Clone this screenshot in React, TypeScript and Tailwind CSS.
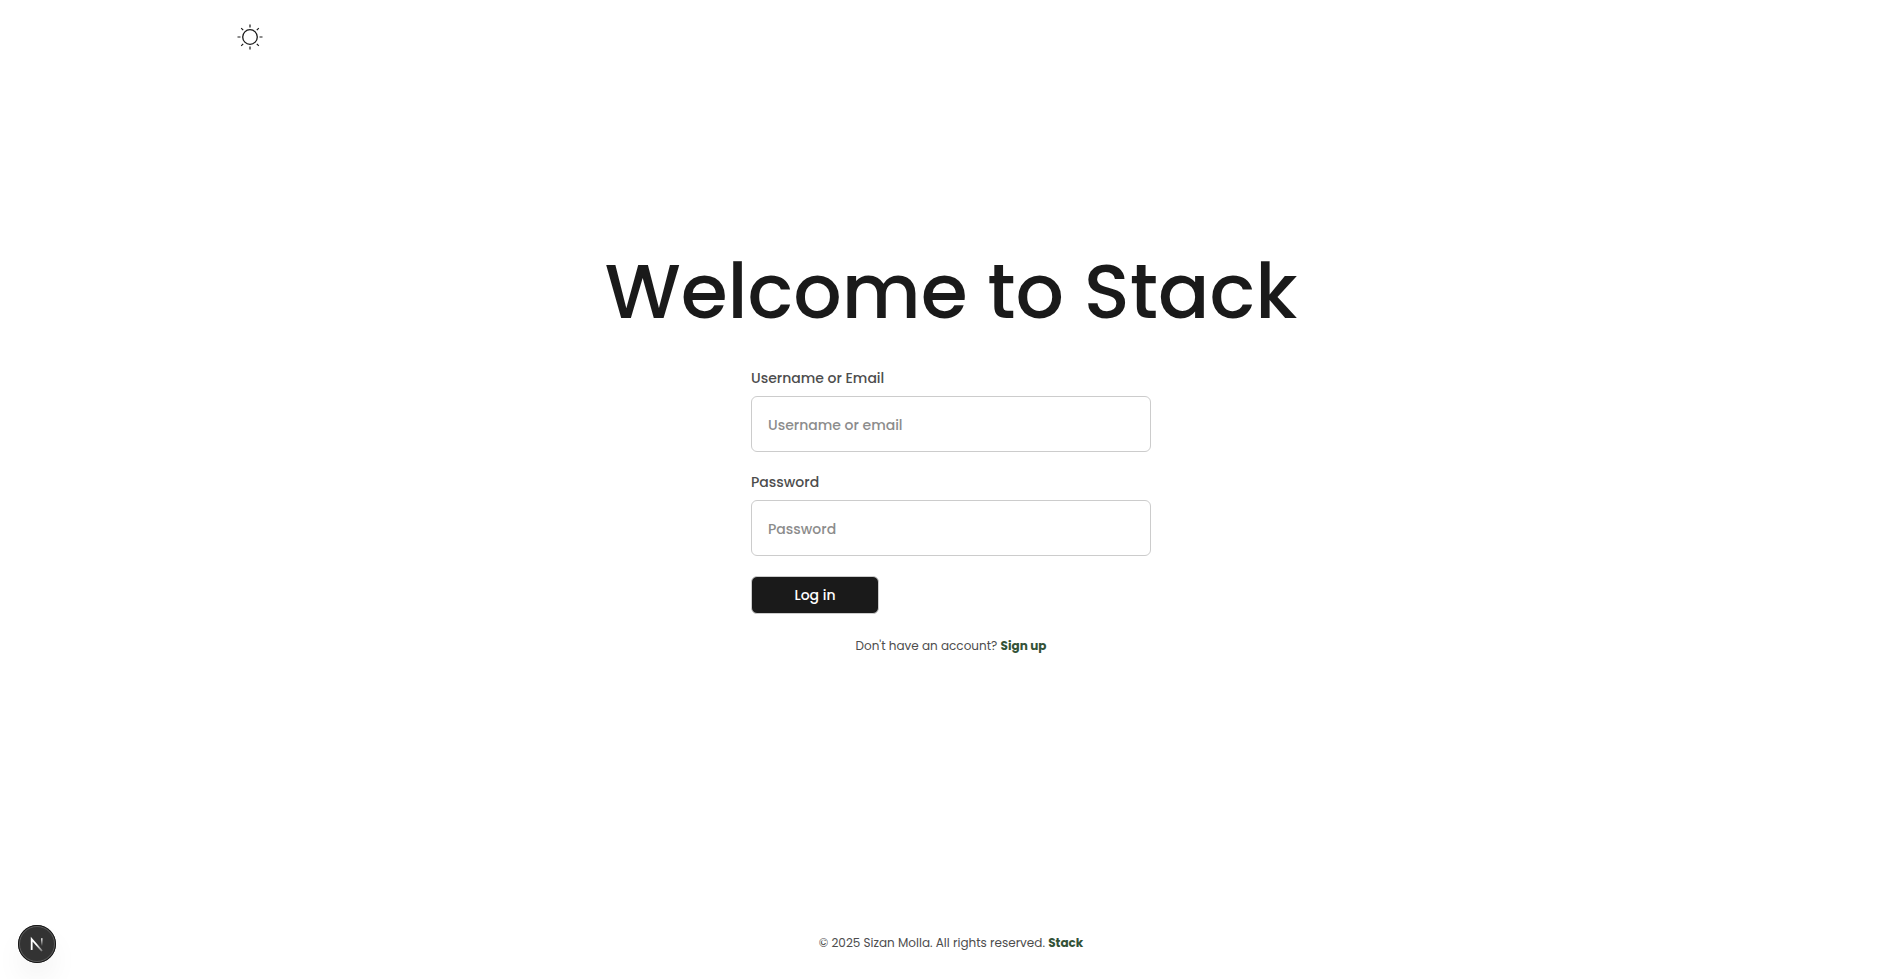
import { useState } from "react";

const linkClass = "font-bold text-[#335237] hover:underline";
const inputClass =
  "h-14 w-full rounded-md border border-[#cccccc] bg-white px-4 pt-0.5 text-sm font-medium text-[#1a1a1a] placeholder:text-[#8c8c8c] focus:border-[#1a1a1a] focus:outline-none";

function SunIcon() {
  return (
    <svg width="26" height="26" viewBox="0 0 26 26" fill="none" stroke="#1a1a1a" strokeWidth="1.2" aria-hidden="true">
      <circle cx="13" cy="13" r="7.3" strokeWidth="1.3" />
      <path d="M13 .5v3M13 22.5v3M.5 13h3M22.5 13h3M4.2 4.2l2 2M19.8 19.8l2 2M4.2 21.8l2-2M19.8 6.2l2-2" />
    </svg>
  );
}

function DevBadge() {
  return (
    <button
      type="button"
      aria-label="Open developer tools"
      className="fixed bottom-4 left-[18px] size-[38px] rounded-full bg-[#333333] shadow-[0_16px_32px_-8px_rgba(0,0,0,0.14)]"
    >
      <svg width="38" height="38" viewBox="0 0 38 38" fill="none" aria-hidden="true">
        <defs>
          <linearGradient id="diagonal" x1="19" y1="19" x2="25" y2="26" gradientUnits="userSpaceOnUse">
            <stop stopColor="#fff" />
            <stop offset="1" stopColor="#fff" stopOpacity="0.3" />
          </linearGradient>
          <linearGradient id="stem" x1="24" y1="13" x2="24" y2="21" gradientUnits="userSpaceOnUse">
            <stop stopColor="#fff" />
            <stop offset="1" stopColor="#fff" stopOpacity="0" />
          </linearGradient>
        </defs>
        <circle cx="19" cy="19" r="18.5" stroke="#171717" />
        <circle cx="19" cy="19" r="17.5" stroke="#5c5c5c" />
        <path d="M13.7 25V14.2L24 26" stroke="url(#diagonal)" strokeWidth="1.8" />
        <path d="M23.8 13.3V21" stroke="url(#stem)" strokeWidth="1.5" />
      </svg>
    </button>
  );
}

type FieldProps = {
  id: string;
  label: string;
  type: string;
  placeholder: string;
  value: string;
  onChange: (value: string) => void;
};

function Field({ id, label, type, placeholder, value, onChange }: FieldProps) {
  return (
    <div className="flex flex-col gap-2">
      <label htmlFor={id} className="text-sm leading-5 font-medium text-[#4d4d4d]">
        {label}
      </label>
      <input
        id={id}
        type={type}
        placeholder={placeholder}
        value={value}
        onChange={(event) => onChange(event.target.value)}
        className={inputClass}
      />
    </div>
  );
}

export default function App() {
  const [username, setUsername] = useState("");
  const [password, setPassword] = useState("");

  return (
    <div className="flex min-h-screen flex-col bg-white font-['Poppins','Inter',sans-serif] text-[#1a1a1a]">
      <header className="mx-auto flex w-full max-w-[1440px] px-1.5 py-6">
        <button type="button" aria-label="Toggle theme">
          <SunIcon />
        </button>
      </header>

      <main className="flex flex-1 flex-col items-center justify-center px-4 pb-[83px]">
        <h1 className="text-center text-[76px] leading-[96px] font-medium">Welcome to Stack</h1>
        <form className="mt-7 flex w-full max-w-[400px] flex-col gap-5" onSubmit={(event) => event.preventDefault()}>
          <Field
            id="username"
            label="Username or Email"
            type="text"
            placeholder="Username or email"
            value={username}
            onChange={setUsername}
          />
          <Field
            id="password"
            label="Password"
            type="password"
            placeholder="Password"
            value={password}
            onChange={setPassword}
          />
          <button
            type="submit"
            className="h-[38px] w-32 rounded-md border border-[#cccccc] bg-[#1a1a1a] text-sm font-medium text-white"
          >
            Log in
          </button>
        </form>
        <p className="mt-[22px] text-xs leading-5 text-[#4d4d4d]">
          Don't have an account?{" "}
          <a href="#signup" className={linkClass}>
            Sign up
          </a>
        </p>
      </main>

      <footer className="px-4 pt-6 pb-[26px] text-center text-xs leading-5 text-[#4d4d4d]">
        © 2025 Sizan Molla. All rights reserved.{" "}
        <a href="#stack" className={linkClass}>
          Stack
        </a>
      </footer>

      <DevBadge />
    </div>
  );
}
